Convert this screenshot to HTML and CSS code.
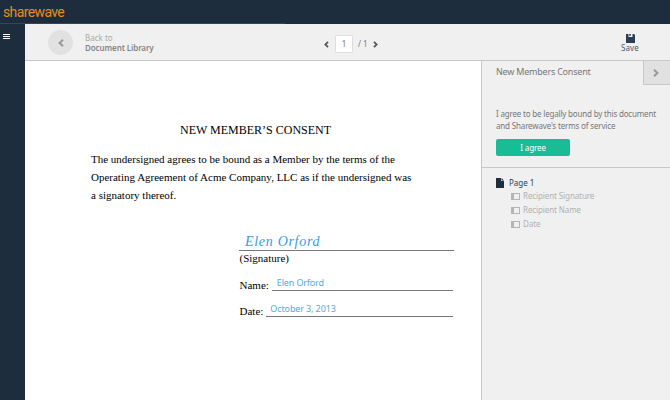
FILE: index.html
```
<!DOCTYPE html>
<html lang="en">
<head>
<meta charset="utf-8">
<title>Sharewave</title>
<link rel="stylesheet" href="styles.css">
</head>
<body>
<div class="app">
  <header class="brand"><span class="logo">sharewave</span></header>
  <div class="body">
    <nav class="rail"><span class="menu"><i></i><i></i><i></i></span></nav>
    <main class="main">
      <div class="toolbar">
        <div class="back">
          <span class="back-btn"><svg width="6" height="8" viewBox="0 0 6 8"><path d="M5 .8 1.6 4 5 7.2"/></svg></span>
          <div class="back-text"><div class="to">Back to</div><div class="lib">Document Library</div></div>
        </div>
        <div class="pager">
          <svg width="5" height="7" viewBox="0 0 5 7"><path d="M4 .8 1.4 3.5 4 6.2"/></svg>
          <span class="num">1</span>
          <span class="total">/ 1</span>
          <svg width="5" height="7" viewBox="0 0 5 7"><path d="M1 .8 3.6 3.5 1 6.2"/></svg>
        </div>
        <div class="save">
          <svg width="9" height="9" viewBox="0 0 9 9"><path fill="#2b3d57" d="M0 0h8l1 1v8H0z"/><path fill="#f0f0f0" d="M2.5 0h4v3h-4z"/><path fill="#2b3d57" d="M3.2 0h1.6v1.8H3.2z"/></svg>
          <span>Save</span>
        </div>
      </div>
      <div class="content">
        <section class="doc">
          <h1>NEW MEMBER’S CONSENT</h1>
          <div class="para">
            <div>The undersigned agrees to be bound as a Member by the terms of the</div>
            <div>Operating Agreement of Acme Company, LLC as if the undersigned was</div>
            <div>a signatory thereof.</div>
          </div>
          <div class="form">
            <div class="sign">Elen Orford</div>
            <div class="caption">(Signature)</div>
            <div class="row"><span class="label">Name:</span><span class="field">Elen Orford</span></div>
            <div class="row"><span class="label">Date:</span><span class="field date">October 3, 2013</span></div>
          </div>
        </section>
        <aside class="panel">
          <div class="consent">
            <div class="head"><h2>New Members Consent</h2><span class="toggle"><svg width="6" height="8" viewBox="0 0 6 8"><path d="M1 .8 4.4 4 1 7.2"/></svg></span></div>
            <div class="terms"><div class="bound">I agree to be legally bound by this document</div><div class="service">and Sharewave's terms of service</div></div>
            <button class="agree">I agree</button>
          </div>
          <div class="outline">
            <div class="page"><svg width="8" height="10" viewBox="0 0 8 10"><path fill="#1e2d3d" d="M0 0h5v3h3v7H0z"/><path fill="#1e2d3d" d="M5.6 0 8 2.4H5.6z"/></svg><span>Page 1</span></div>
            <div class="item"><i></i><span>Recipient Signature</span></div>
            <div class="item"><i></i><span>Recipient Name</span></div>
            <div class="item"><i></i><span>Date</span></div>
          </div>
        </aside>
      </div>
    </main>
  </div>
</div>
</body>
</html>
```
FILE: styles.css
```
* { box-sizing: border-box; }
body { margin: 0; font: 8px/10px "Noto Sans", sans-serif; color: #777; }
h1, h2 { margin: 0; font-weight: 400; }
svg { display: block; flex: none; }
.app { width: 670px; height: 400px; display: flex; flex-direction: column; overflow: hidden; background: #1e2d3d; white-space: nowrap; }
.brand { height: 24px; padding: 3px 0 0 3px; background: linear-gradient(#33475a, #33475a) 0 23px / 285px 1px no-repeat; }
.logo { display: block; font: 400 14px/18px Roboto, sans-serif; color: #e88a22; letter-spacing: -.62px; }
.body { flex: 1; display: flex; min-height: 0; }
.rail { width: 25px; padding: 10px 0 0 3px; }
.menu { display: flex; flex-direction: column; gap: 1px; width: 7px; }
.menu i { height: 1px; background: #fff; }
.main { flex: 1; display: flex; flex-direction: column; }
.toolbar { height: 37px; display: flex; background: #f0f0f0; border-bottom: 1px solid #c8c8c8; }
.back { width: 299px; padding: 6px 0 0 23px; display: flex; }
.back-btn { width: 25px; height: 25px; border-radius: 50%; background: #e1e1e1; display: flex; align-items: center; justify-content: center; }
.back path, .toggle path { fill: none; stroke: #999; stroke-width: 2; }
.back-text { padding: 3px 0 0 12px; }
.to { color: #aaa; }
.lib { color: #858585; font-weight: 600; letter-spacing: -.1px; }
.pager { width: 271px; display: flex; align-items: center; padding-top: 4px; }
.pager path { fill: none; stroke: #555; stroke-width: 1.8; }
.num { width: 18px; height: 18px; margin: 0 5px 0 6px; border: 1px solid #ddd; border-radius: 2px; background: #fff; text-align: center; line-height: 16px; }
.total { width: 15px; }
.save { width: 68px; padding: 10px 0 0 26px; color: #3f5d75; letter-spacing: .1px; }
.save svg { margin-left: 5px; }
.content { flex: 1; display: flex; min-height: 0; }
.doc { width: 456px; background: #fff; color: #000; padding: 60px 0 0 66px; font: 11px/18px "Liberation Serif", serif; }
h1 { font: 12px/18px "Liberation Serif", serif; padding-left: 89px; }
.para { margin-top: 11px; }
.form { width: 215px; margin: 29px 0 0 148px; }
.sign { height: 18px; border-bottom: 1px solid #777; padding-left: 6px; font: italic 14px/18px "Liberation Serif", serif; letter-spacing: .7px; color: #389ddf; }
.caption { line-height: 15px; padding-left: .5px; }
.row { display: flex; width: 214px; height: 16px; margin-top: 10px; }
.caption + .row { margin-top: 9px; padding-top: 1px; height: 17px; }
.label { line-height: 18px; margin-left: .5px; }
.field { flex: 1; margin-left: 3px; height: 15px; border-bottom: 1px solid #777; padding-left: 5px; font: 9px/13px "Noto Sans", sans-serif; color: #55aae0; letter-spacing: -.15px; }
.date { padding-left: 4px; letter-spacing: -.12px; }
.panel { width: 189px; background: #f0f0f0; border-left: 1px solid #c8c8c8; }
.consent { height: 107px; border-bottom: 1px solid #c8c8c8; padding-left: 14px; }
.head { display: flex; justify-content: space-between; height: 24px; }
h2 { font: 9px/21px "Noto Sans", sans-serif; letter-spacing: -.22px; }
.toggle { width: 27px; height: 24px; padding-right: 3px; background: #e1e1e1; border: solid #c8c8c8; border-width: 0 0 1px 1px; display: flex; align-items: center; justify-content: center; }
.terms { margin-top: 23px; line-height: 12px; }
.bound { letter-spacing: -.18px; }
.service { letter-spacing: -.16px; }
.agree { display: block; width: 74px; height: 17px; margin-top: 7px; padding: 0; border: 0; border-radius: 2px; background: #1abc95; color: #fff; font: 8px/17px "Noto Sans", sans-serif; letter-spacing: -.1px; }
.outline { padding: 9px 0 0 14px; }
.page { display: flex; align-items: center; gap: 5px; height: 12px; color: #2b3d4f; }
.item { display: flex; align-items: center; gap: 3px; height: 14px; padding-left: 15px; color: #b0b0b0; letter-spacing: -.1px; }
.item i { width: 9px; height: 7px; border: 1px solid #b5b5b5; border-left-width: 3px; }
```
